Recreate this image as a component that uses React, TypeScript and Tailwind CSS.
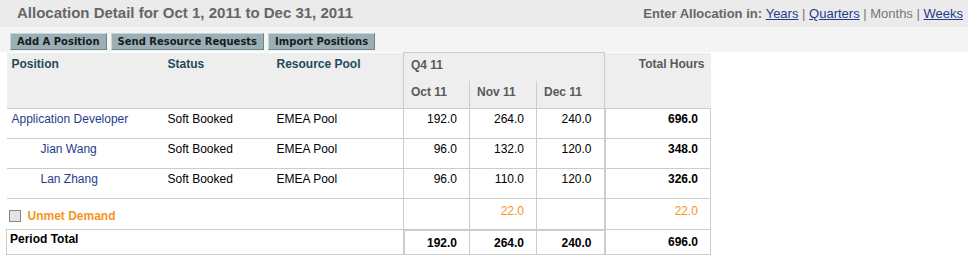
import React from "react";

interface Row {
  name: string;
  indent?: boolean;
  status: string;
  pool: string;
  oct: string;
  nov: string;
  dec: string;
  total: string;
}

const rows: Row[] = [
  { name: "Application Developer", status: "Soft Booked", pool: "EMEA Pool", oct: "192.0", nov: "264.0", dec: "240.0", total: "696.0" },
  { name: "Jian Wang", indent: true, status: "Soft Booked", pool: "EMEA Pool", oct: "96.0", nov: "132.0", dec: "120.0", total: "348.0" },
  { name: "Lan Zhang", indent: true, status: "Soft Booked", pool: "EMEA Pool", oct: "96.0", nov: "110.0", dec: "120.0", total: "326.0" },
];

const btn =
  "h-[17px] px-[6px] bg-[#9ab0b6] border border-[#c9d6d9] border-b-[#6f8489] border-r-[#6f8489] text-[10px] font-bold text-[#1b1b1b] leading-none font-['DejaVu_Sans',sans-serif]";

const App = () => {
  return (
    <div className="w-[968px] h-[259px] bg-white font-['Liberation_Sans',Arial,sans-serif] text-[12px] text-black overflow-hidden">
      {/* title bar */}
      <div className="h-[27px] bg-[#ebebeb] flex items-center justify-between pl-[17px] pr-[5px]">
        <h1 className="text-[15px] font-bold text-[#666666]">
          Allocation Detail for Oct 1, 2011 to Dec 31, 2011
        </h1>
        <div className="text-[13px] text-[#777777]">
          <span className="font-bold text-[#666666]">Enter Allocation in: </span>
          <a className="underline text-[#1f3d8c]">Years</a> |{" "}
          <a className="underline text-[#1f3d8c]">Quarters</a> | Months |{" "}
          <a className="underline text-[#1f3d8c]">Weeks</a>
        </div>
      </div>

      {/* toolbar */}
      <div className="bg-[#f4f4f4] pt-[6px] pb-[2px] pl-[10px] flex gap-[4px]">
        <button className={btn}>Add A Position</button>
        <button className={btn}>Send Resource Requests</button>
        <button className={btn}>Import Positions</button>
      </div>

      <table className="ml-[6px] w-[704px] table-fixed border-collapse">
        <colgroup>
          <col className="w-[159px]" />
          <col className="w-[107px]" />
          <col className="w-[131px]" />
          <col className="w-[66px]" />
          <col className="w-[67px]" />
          <col className="w-[68px]" />
          <col className="w-[106px]" />
        </colgroup>
        <thead className="bg-[#eeeeee] font-bold">
          <tr className="h-[28px]">
            <th rowSpan={2} className="align-top text-left pl-[5px] pt-[2px] text-[#234a5a]">Position</th>
            <th rowSpan={2} className="align-top text-left pl-[2px] pt-[2px] text-[#234a5a]">Status</th>
            <th rowSpan={2} className="align-top text-left pl-[4px] pt-[2px] text-[#234a5a]">Resource Pool</th>
            <th colSpan={3} className="text-left pl-[7px] pb-[3px] text-[#5a5a5a] border-t border-l border-[#cccccc]">Q4 11</th>
            <th rowSpan={2} className="align-top text-right pr-[6px] pt-[2px] text-[#5a5a5a] border-l border-[#cccccc]">Total Hours</th>
          </tr>
          <tr className="h-[28px] text-[#5a5a5a]">
            <th className="text-left pl-[7px] pb-[5px] border-l border-[#cccccc]">Oct 11</th>
            <th className="text-left pl-[7px] pb-[5px] border-l border-[#cccccc]">Nov 11</th>
            <th className="text-left pl-[7px] pb-[5px] border-l border-[#cccccc]">Dec 11</th>
          </tr>
        </thead>
        <tbody>
          {rows.map((r) => (
            <tr key={r.name} className="h-[30px] border-t border-[#cccccc] align-top">
              <td className={`pt-[1px] text-[#1f3d8c] ${r.indent ? "pl-[34px]" : "pl-[5px]"}`}>{r.name}</td>
              <td className="pt-[1px] pl-[2px]">{r.status}</td>
              <td className="pt-[1px] pl-[4px]">{r.pool}</td>
              <td className="pt-[1px] pr-[12px] text-right border-l border-[#cccccc]">{r.oct}</td>
              <td className="pt-[1px] pr-[12px] text-right border-l border-[#cccccc]">{r.nov}</td>
              <td className="pt-[1px] pr-[12px] text-right border-l border-[#cccccc]">{r.dec}</td>
              <td className="pt-[1px] pr-[12px] text-right font-bold border-l-2 border-r border-[#cccccc]">{r.total}</td>
            </tr>
          ))}
          <tr className="h-[31px] border-t border-[#cccccc] align-top">
            <td colSpan={3} className="pt-[8px] pl-[2px]">
              <label className="flex items-center gap-[7px] text-[#f7941d] font-bold">
                <span className="inline-block w-[12px] h-[12px] border border-[#8a8a8a] bg-[#e4e4e4]" />
                Unmet Demand
              </label>
            </td>
            <td className="border-l border-[#cccccc]" />
            <td className="pt-[3px] pr-[12px] text-right text-[#f7941d] border-l border-[#cccccc]">22.0</td>
            <td className="border-l border-[#cccccc]" />
            <td className="pt-[3px] pr-[12px] text-right text-[#f7941d] border-l-2 border-r border-[#cccccc]">22.0</td>
          </tr>
          <tr className="h-[25px] border-t border-b border-[#cccccc] align-top font-bold">
            <td colSpan={3} className="pt-0 pl-[3px] border-l border-[#cccccc]">Period Total</td>
            <td className="pt-[3px] pr-[12px] text-right border-l-2 border-t-2 border-[#cccccc]">192.0</td>
            <td className="pt-[3px] pr-[12px] text-right border-l border-t-2 border-[#cccccc]">264.0</td>
            <td className="pt-[3px] pr-[12px] text-right border-l border-t-2 border-[#cccccc]">240.0</td>
            <td className="pt-[3px] pr-[12px] text-right border-l-2 border-r border-[#cccccc]">696.0</td>
          </tr>
        </tbody>
      </table>
    </div>
  );
};

export default App;
